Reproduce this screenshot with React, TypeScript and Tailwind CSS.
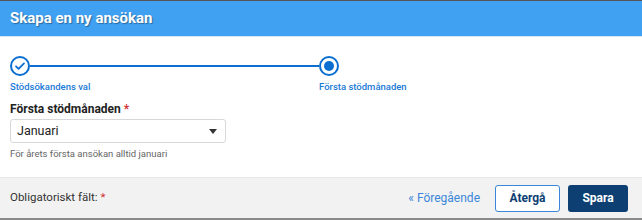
export default function App() {
  return (
    <div className="w-[642px] h-[220px] overflow-hidden bg-white font-['Roboto',sans-serif] border-t border-[#555] border-b-2 border-b-[#8a8a8a] flex flex-col">
      {/* Header */}
      <div className="h-[36px] bg-[#40a0f2] flex items-center px-[10px] border-b border-[#d6e8f8]">
        <h1 className="text-[15px] font-bold text-white [text-shadow:1px_1px_1px_rgba(0,0,0,0.35)]">
          Skapa en ny ansökan
        </h1>
      </div>

      {/* Stepper */}
      <div className="pt-[19px] px-[10px]">
        <div className="flex items-center">
          <span className="w-[20px] h-[20px] rounded-full border-2 border-[#0b6fd1] flex items-center justify-center shrink-0">
            <svg width="12" height="12" viewBox="0 0 12 12" fill="none">
              <path d="M2 6.3l2.6 2.6L10 3.4" stroke="#0b6fd1" strokeWidth="1.8" strokeLinecap="round" strokeLinejoin="round" />
            </svg>
          </span>
          <span className="h-[2px] bg-[#0b6fd1] w-[289px]" />
          <span className="w-[20px] h-[20px] rounded-full border-2 border-[#0b6fd1] flex items-center justify-center shrink-0">
            <span className="w-[10px] h-[10px] rounded-full bg-[#0b6fd1]" />
          </span>
        </div>
        <div className="flex mt-[4px] text-[9.5px] font-medium text-[#1a7ad6]">
          <span className="w-[309px]">Stödsökandens val</span>
          <span>Första stödmånaden</span>
        </div>
      </div>

      {/* Field */}
      <div className="px-[10px] pt-[6px]">
        <label className="block text-[12px] font-bold text-[#222]">
          Första stödmånaden <span className="text-[#d32f2f]">*</span>
        </label>
        <div className="mt-[1px] w-[216px] h-[24px] border border-[#d8d8d8] rounded-[3px] flex items-center justify-between pl-[6px] pr-[8px]">
          <span className="text-[12.5px] text-[#222]">Januari</span>
          <svg width="8" height="5" viewBox="0 0 8 5">
            <path d="M0 0h8L4 5z" fill="#333" />
          </svg>
        </div>
        <p className="mt-[4px] text-[9.5px] text-[#666]">För årets första ansökan alltid januari</p>
      </div>

      {/* Footer */}
      <div className="mt-auto h-[41px] bg-[#f2f2f2] border-t border-[#e6e6e6] flex items-center px-[10px]">
        <span className="text-[11.5px] text-[#333]">
          Obligatoriskt fält: <span className="text-[#d32f2f]">*</span>
        </span>
        <div className="ml-auto flex items-center">
          <a className="text-[12px] text-[#3a86d9] mr-[15px]">« Föregående</a>
          <button className="w-[65px] h-[27px] bg-white border border-[#3a86d9] rounded-[3px] text-[12px] font-bold text-[#0d3f73] mr-[8px]">
            Återgå
          </button>
          <button className="w-[60px] h-[27px] bg-[#0d3f73] rounded-[3px] text-[12px] font-bold text-white mr-[4px]">
            Spara
          </button>
        </div>
      </div>
    </div>
  );
}
